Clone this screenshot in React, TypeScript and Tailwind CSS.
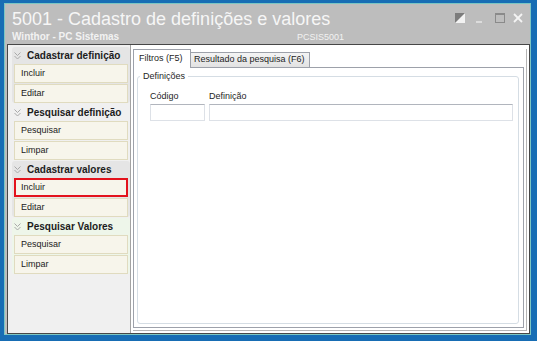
import React from "react";

type Tone = "gray" | "none" | "green";

interface Section {
  title: string;
  items: string[];
  tone: Tone;
  active?: number;
}

const sections: Section[] = [
  { title: "Cadastrar definição", items: ["Incluir", "Editar"], tone: "gray" },
  { title: "Pesquisar definição", items: ["Pesquisar", "Limpar"], tone: "none" },
  { title: "Cadastrar valores", items: ["Incluir", "Editar"], tone: "gray", active: 0 },
  { title: "Pesquisar Valores", items: ["Pesquisar", "Limpar"], tone: "green" },
];

const toneClass: Record<Tone, string> = {
  gray: "bg-[#e5e5e5]",
  none: "bg-transparent",
  green: "bg-[#eef6ea]",
};

const Chevrons = () => (
  <svg width="7" height="8" viewBox="0 0 7 8" fill="none" stroke="#a9a9a9" strokeWidth="1">
    <polyline points="0.5,0.5 3.5,3.5 6.5,0.5" />
    <polyline points="0.5,4 3.5,7 6.5,4" />
  </svg>
);

const WindowButtons = () => (
  <div className="mt-[4px] flex items-start">
    {/* desacoplar */}
    <svg width="10" height="10" viewBox="0 0 10 10">
      <rect x="0" y="0" width="10" height="10" fill="#f2f2f2" />
      <polygon points="0,0 10,0 0,10" fill="#7c7c7c" />
    </svg>
    <svg className="ml-[11px]" width="6" height="10" viewBox="0 0 6 10">
      <rect x="0" y="8" width="6" height="2" fill="#dcdcdc" />
    </svg>
    <svg className="ml-[13px]" width="10" height="10" viewBox="0 0 10 10" fill="none">
      <rect x="0.5" y="0.5" width="9" height="9" stroke="#8a8a8a" />
      <rect x="0" y="0" width="10" height="2" fill="#8a8a8a" />
    </svg>
    <svg className="ml-[8px]" width="10" height="10" viewBox="0 0 10 10" stroke="#f4f4f4" strokeWidth="1.8">
      <line x1="1" y1="1" x2="9" y2="9" />
      <line x1="9" y1="1" x2="1" y2="9" />
    </svg>
  </div>
);

const SideSection = ({ section }: { section: Section }) => (
  <div className={`mb-[1px] rounded-[3px] px-[2px] ${toneClass[section.tone]}`}>
    <div className="flex h-[17px] items-center gap-[6px]">
      <Chevrons />
      <span className="text-[10px] font-bold leading-[12px] text-[#1c1c1c]">{section.title}</span>
    </div>
    {section.items.map((item, i) =>
      section.active === i ? (
        <div
          key={item}
          className="mb-[1px] flex h-[19px] items-center border-2 border-[#e3121c] bg-[#f7f5eb] pl-[5px] text-[9px] text-[#222]"
        >
          {item}
        </div>
      ) : (
        <div
          key={item}
          className="mb-[1px] flex h-[19px] items-center border border-[#e0dbbf] bg-[#f7f5eb] pl-[6px] text-[9px] text-[#222]"
        >
          {item}
        </div>
      )
    )}
  </div>
);

export default function App() {
  return (
    <div className="h-[341px] w-[537px] bg-[#176db4] pb-[6px] pl-[4px] pr-[6px] pt-[3px] font-['Liberation_Sans',Arial,sans-serif]">
      <div className="flex h-full flex-col border border-[#7cc6c3] bg-[#bdbdbd]">
        {/* barra de título */}
        <div className="h-[40px] px-[7px] pt-[5px]">
          <div className="flex items-start justify-between">
            <span className="text-[18px] leading-[20px] text-[#f6f6f6]">
              5001 - Cadastro de definições e valores
            </span>
            <WindowButtons />
          </div>
          <div className="mt-[2px] flex text-[#f2f2f2]">
            <span className="w-[285px] text-[10px] font-bold leading-[12px]">Winthor - PC Sistemas</span>
            <span className="text-[9px] leading-[12px]">PCSIS5001</span>
          </div>
        </div>

        {/* conteúdo */}
        <div className="ml-[2px] flex flex-1 border border-[#474747]">
          <div className="w-[123px] border-r border-[#a3a3a3] bg-[#f0f0f0] pl-[4px] pt-[2px]">
            {sections.map((s) => (
              <SideSection key={s.title} section={s} />
            ))}
          </div>

          <div className="flex flex-1 bg-white pb-[2px] pl-[2px] pr-[2px] pt-[4px]">
            <div className="flex flex-1 flex-col border-b border-r border-[#b4b4b4] pb-[2px] pr-[2px]">
              <div className="flex h-[18px] items-end text-[9px] text-[#1e1e1e]">
                <div className="relative z-10 -mb-[1px] flex h-[19px] w-[58px] items-center border border-b-0 border-[#9da1aa] bg-white pl-[5px]">
                  Filtros (F5)
                </div>
                <div className="flex h-[15px] w-[119px] items-center border border-b-0 border-l-0 border-[#9da1aa] bg-gradient-to-b from-[#f4f4f4] to-[#e2e2e2] pl-[3px]">
                  Resultado da pesquisa (F6)
                </div>
              </div>

              <div className="flex flex-1 flex-col border border-[#9da1aa] pb-[3px] pl-[3px] pr-[4px] pt-[2px]">
                <fieldset className="flex-1 rounded-[3px] border border-[#d5dde4]">
                  <legend className="ml-[2px] px-[3px] text-[9px] leading-[13px] text-[#1e1e1e]">Definições</legend>
                  <div className="mt-[7px] flex gap-[4px] pl-[12px] text-[9px] text-[#1e1e1e]">
                    <div className="w-[55px]">
                      <div className="leading-[13px]">Código</div>
                      <div className="mt-[1px] h-[17px] border border-[#dde1e7] border-t-[#b1b5bd]" />
                    </div>
                    <div className="w-[304px]">
                      <div className="leading-[13px]">Definição</div>
                      <div className="mt-[1px] h-[17px] border border-[#dde1e7] border-t-[#b1b5bd]" />
                    </div>
                  </div>
                </fieldset>
              </div>
            </div>
          </div>
        </div>
      </div>
    </div>
  );
}
